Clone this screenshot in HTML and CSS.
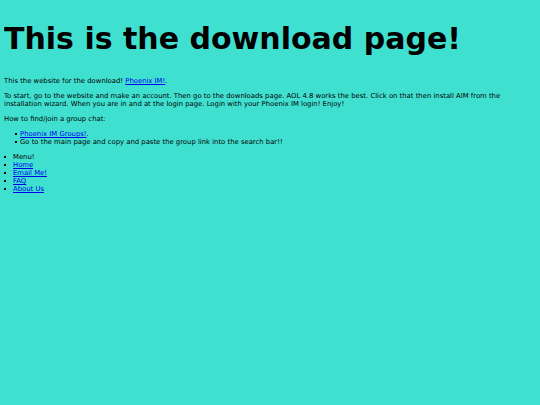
FILE: index.html
```html
<!DOCTYPE html>
<html>
<head>
<meta charset="utf-8">
<link rel="stylesheet" href="styles.css">
</head>
<body>
<h1 class="title">This is the download page!</h1>
<p class="text">This the website for the download! <a href="#">Phoenix IM!</a>.</p>
<p class="text">To start, go to the website and make an account. Then go to the downloads page. AOL 4.8 works the best. Click on that then install AIM from the installation wizard. When you are in and at the login page. Login with your Phoenix IM login! Enjoy!</p>
<p class="text">How to find/join a group chat:</p>
<ul class="groups">
<li><a href="#">Phoenix IM Groups!</a>.</li>
<li>Go to the main page and copy and paste the group link into the search bar!!</li>
</ul>
<ul class="menu">
<li>Menu!</li>
<li><a href="#">Home</a></li>
<li><a href="#">Email Me!</a></li>
<li><a href="#">FAQ</a></li>
<li><a href="#">About Us</a></li>
</ul>
</body>
</html>
```
FILE: styles.css
```css
html { background: #40e0d0; }
body {
  margin: 4px;
  font-family: "DejaVu Sans", Verdana, sans-serif;
  font-size: 6.85px;
  line-height: 8px;
  color: #000;
}
.title {
  font-size: 30px;
  line-height: 37px;
  font-weight: bold;
  margin: 16px 0 20px;
}
.text { margin: 7px 0; }
a { color: #0000ee; }
ul { list-style: none; margin: 7px 0; }
.groups { padding-left: 16px; }
.menu { padding-left: 9px; }
li::before {
  content: "";
  display: inline-block;
  width: 2px;
  height: 2px;
  background: #000;
  vertical-align: middle;
}
.groups li::before { margin-left: -5px; margin-right: 3px; }
.menu li::before { margin-left: -9px; margin-right: 7px; }
```
